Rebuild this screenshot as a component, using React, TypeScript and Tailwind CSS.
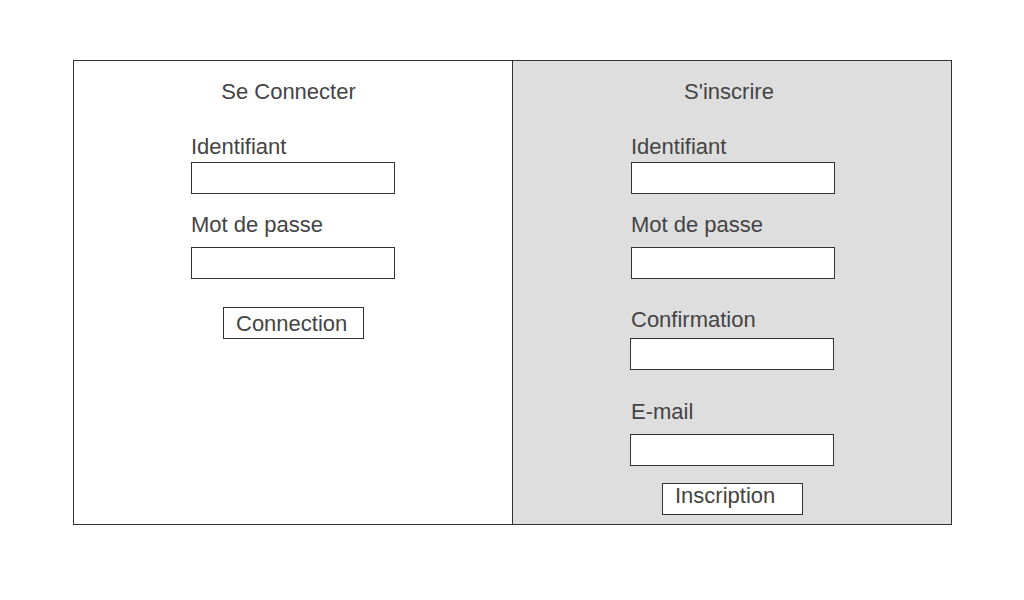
import React from "react";

const font = { fontFamily: '"Liberation Sans", Arial, sans-serif' };

function Label({ text, className }: { text: string; className: string }) {
  return (
    <div className={`h-[25px] leading-[25px] text-[22px] text-[#444444] whitespace-nowrap ${className}`}>
      {text}
    </div>
  );
}

function Input({ className }: { className: string }) {
  return <div className={`w-[204px] h-[32px] bg-white border border-[#333333] box-border ${className}`} />;
}

export default function App() {
  return (
    <div className="w-[1024px] h-[600px] bg-white pt-[60px] pl-[73px]" style={font}>
      <div className="flex w-[879px] h-[465px] border border-[#333333] box-border">
        {/* Left panel */}
        <div className="w-[438px] h-full bg-white flex flex-col items-start">
          <div className="w-full mt-[18px] pr-[9px] text-center h-[25px] leading-[25px] text-[22px] text-[#444444] whitespace-nowrap">
            Se Connecter
          </div>
          <Label text="Identifiant" className="mt-[30px] ml-[117px]" />
          <Input className="mt-[3px] ml-[117px]" />
          <Label text="Mot de passe" className="mt-[18px] ml-[117px]" />
          <Input className="mt-[10px] ml-[117px]" />
          <div className="mt-[28px] ml-[149px] w-[141px] h-[32px] box-border border border-[#333333] bg-white pl-[12px] pt-[3px] leading-[25px] text-[22px] text-[#444444] whitespace-nowrap">
            Connection
          </div>
        </div>
        {/* Right panel */}
        <div className="w-[439px] h-full bg-[#dedede] border-l border-[#333333] box-border flex flex-col items-start">
          <div className="w-full mt-[18px] pr-[6px] text-center h-[25px] leading-[25px] text-[22px] text-[#444444] whitespace-nowrap">
            S&apos;inscrire
          </div>
          <Label text="Identifiant" className="mt-[30px] ml-[118px]" />
          <Input className="mt-[3px] ml-[118px]" />
          <Label text="Mot de passe" className="mt-[18px] ml-[118px]" />
          <Input className="mt-[10px] ml-[118px]" />
          <Label text="Confirmation" className="mt-[28px] ml-[118px]" />
          <Input className="mt-[6px] ml-[117px]" />
          <Label text="E-mail" className="mt-[29px] ml-[118px]" />
          <Input className="mt-[10px] ml-[117px]" />
          <div className="mt-[17px] ml-[149px] w-[141px] h-[32px] box-border border border-[#333333] bg-white pl-[12px] pt-0 leading-[23px] text-[22px] text-[#444444] whitespace-nowrap">
            Inscription
          </div>
        </div>
      </div>
    </div>
  );
}
